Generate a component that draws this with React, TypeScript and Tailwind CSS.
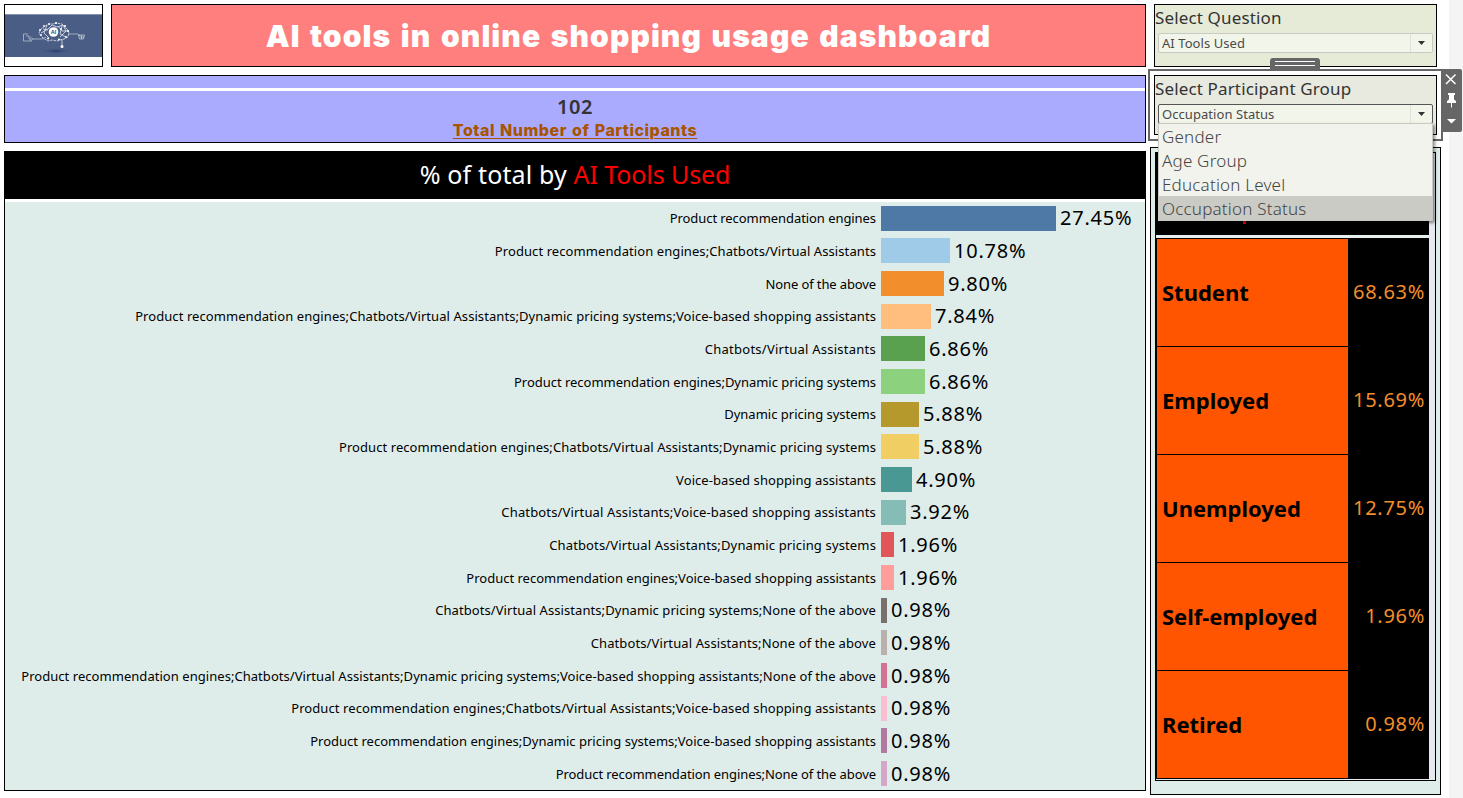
import React from "react";

const bars = [
  { label: "Product recommendation engines", value: 27.45, fill: "bg-[#4e79a7]", tracking: -0.067 },
  { label: "Product recommendation engines;Chatbots/Virtual Assistants", value: 10.78, fill: "bg-[#a0cbe8]", tracking: 0.086 },
  { label: "None of the above", value: 9.8, fill: "bg-[#f28e2b]", tracking: -0.12 },
  { label: "Product recommendation engines;Chatbots/Virtual Assistants;Dynamic pricing systems;Voice-based shopping assistants", value: 7.84, fill: "bg-[#ffbe7d]", tracking: 0.07 },
  { label: "Chatbots/Virtual Assistants", value: 6.86, fill: "bg-[#59a14f]", tracking: 0.25 },
  { label: "Product recommendation engines;Dynamic pricing systems", value: 6.86, fill: "bg-[#8cd17d]", tracking: -0.03 },
  { label: "Dynamic pricing systems", value: 5.88, fill: "bg-[#b6992d]", tracking: 0 },
  { label: "Product recommendation engines;Chatbots/Virtual Assistants;Dynamic pricing systems", value: 5.88, fill: "bg-[#f1ce63]", tracking: 0.067 },
  { label: "Voice-based shopping assistants", value: 4.9, fill: "bg-[#499894]", tracking: 0.065 },
  { label: "Chatbots/Virtual Assistants;Voice-based shopping assistants", value: 3.92, fill: "bg-[#86bcb6]", tracking: 0.15 },
  { label: "Chatbots/Virtual Assistants;Dynamic pricing systems", value: 1.96, fill: "bg-[#e15759]", tracking: 0.14 },
  { label: "Product recommendation engines;Voice-based shopping assistants", value: 1.96, fill: "bg-[#ff9d9a]", tracking: 0 },
  { label: "Chatbots/Virtual Assistants;Dynamic pricing systems;None of the above", value: 0.98, fill: "bg-[#79706e]", tracking: 0.075 },
  { label: "Chatbots/Virtual Assistants;None of the above", value: 0.98, fill: "bg-[#bab0ac]", tracking: 0.11 },
  { label: "Product recommendation engines;Chatbots/Virtual Assistants;Dynamic pricing systems;Voice-based shopping assistants;None of the above", value: 0.98, fill: "bg-[#d37295]", tracking: 0.045 },
  { label: "Product recommendation engines;Chatbots/Virtual Assistants;Voice-based shopping assistants", value: 0.98, fill: "bg-[#fabfd2]", tracking: 0.08 },
  { label: "Product recommendation engines;Dynamic pricing systems;Voice-based shopping assistants", value: 0.98, fill: "bg-[#b07aa1]", tracking: 0.01 },
  { label: "Product recommendation engines;None of the above", value: 0.98, fill: "bg-[#d4a6c8]", tracking: -0.085 },
];

const groups = [
  ["Student", "68.63%"],
  ["Employed", "15.69%"],
  ["Unemployed", "12.75%"],
  ["Self-employed", "1.96%"],
  ["Retired", "0.98%"],
];

const options = ["Gender", "Age Group", "Education Level", "Occupation Status"];

function Logo() {
  return (
    <svg width="97" height="43" viewBox="0 0 97 43" className="block">
      <defs>
        <radialGradient id="shade">
          <stop offset="0" stopColor="#243d70" />
          <stop offset="1" stopColor="#4a5d84" stopOpacity="0" />
        </radialGradient>
      </defs>
      <rect width="97" height="43" fill="#4a5d84" />
      <rect width="97" height="1" fill="#8492ab" />
      <ellipse cx="51" cy="37" rx="16" ry="3" fill="url(#shade)" />
      <g fill="none" stroke="#d3d9e4" strokeWidth="0.9">
        <path d="M36 22l-2-3 2-4 4-3 4-2 4 0 3-1 6 1 3 3 3 3 1 3-1 4-4 2-4 1-3 1-5-1-4 1-5-3z" strokeDasharray="2.500 0.800" />
        <path d="M36 19l7-4 4-4 5 2 6-2 3 6-4 4M42 11l-3 8 5 5M57 12l-2 8 6 3M53 12l4 5 5 0M38 15l5 1M55 23l3-3M57 25v7" />
        <path d="M23 20h-4.500v7H27M21 22h3v3h2v2M28 25.500l-3-3M27 25h10l4-2M63 20h10l2 2" opacity=".7" />
        <path d="M73.500 21h6l-1 4h-4zM75 23h4M76.500 21v4" opacity=".75" />
      </g>
      <g fill="#fff">
        <circle cx="35" cy="16" r="1" /><circle cx="39" cy="12" r=".9" />
        <circle cx="44" cy="10" r=".9" /><circle cx="51" cy="9" r="1.100" />
        <circle cx="60" cy="12" r="1.100" /><circle cx="56" cy="15" r=".9" />
        <circle cx="63" cy="17" r="1.100" /><circle cx="36" cy="21" r=".9" />
        <circle cx="43" cy="24.500" r="1" /><circle cx="54" cy="25.500" r="1" />
        <circle cx="61" cy="23" r="1" /><circle cx="57" cy="32.500" r="1.500" />
        <circle cx="48.500" cy="18" r="4.800" />
      </g>
      <text x="48.500" y="20" textAnchor="middle" fontSize="5.500" fontWeight="700" fontFamily="Liberation Sans, sans-serif" fill="#2d4273">AI</text>
    </svg>
  );
}

function Select({ value, border }: { value: string; border: string }) {
  return (
    <div className={"ml-[3px] flex h-[20px] w-[275px] rounded-[2px] border bg-[#f2f5ea] " + border}>
      <span className="flex-1 pl-[3px] text-[13px] leading-[18px] tracking-[0.06px] text-[#4a4a4a]">{value}</span>
      <span className="flex w-[22px] items-center justify-center border-l border-[#dfe1da]">
        <svg width="7" height="4"><path d="M0 0h7L3.5 4z" fill="#333" /></svg>
      </span>
    </div>
  );
}

export default function App() {
  return (
    <div className="flex h-[798px] w-[1463px] overflow-hidden bg-white pl-1 pt-1 font-['Noto_Sans',sans-serif] whitespace-nowrap">
      <main className="flex w-[1142px] flex-col gap-2">
        <header className="flex h-[63px] gap-2">
          <div className="flex w-[99px] items-center border border-black"><Logo /></div>
          <h1 className="flex flex-1 items-center justify-center border border-black bg-[#ff7f7f] pt-px font-['Inter',sans-serif] text-[30px] font-black tracking-[1.1px] [word-spacing:2.5px] text-white">
            AI tools in online shopping usage dashboard
          </h1>
        </header>
        <section className="flex h-[68px] flex-col border border-black bg-[#aaaaff] text-center">
          <div className="h-[15px] border-b-3 border-white" />
          <div className="pt-[4px] text-[20px] leading-[24px] font-semibold tracking-[0.6px] text-[#333]">102</div>
          <div className="pt-px font-['Inter',sans-serif] text-[16px] leading-[21px] font-extrabold tracking-[0.5px] [word-spacing:1.2px] text-[#a85400] underline decoration-1 underline-offset-2">
            Total Number of Participants
          </div>
        </section>
        <section className="flex h-[640px] flex-col border border-black bg-[#dfedea]">
          <h2 className="h-[50px] shrink-0 border-b-3 border-white bg-black text-center text-[25px] leading-[44px] tracking-[0.15px] text-white">
            % of total by <span className="tracking-[-0.1px] text-[#ff0000]">AI Tools Used</span>
          </h2>
          <div className="grid flex-1 grid-rows-18">
            {bars.map((b) => (
              <div key={b.label} className="flex min-h-0 items-center">
                <span className="w-[871px] text-right text-[13px] leading-4 text-black" style={{ letterSpacing: b.tracking }}>{b.label}</span>
                <span className={"ml-[5px] h-[25px] " + b.fill} style={{ width: Math.round(b.value * 6.375 + 0.1) }} />
                <span className="ml-1 text-[20px] leading-6 tracking-[0.75px] text-black">{b.value.toFixed(2)}%</span>
              </div>
            ))}
          </div>
        </section>
      </main>

      <aside className="ml-[2px] flex w-[295px] flex-col">
        <section className="relative ml-[6px] h-[63px] w-[283px] border border-black bg-[#e6ebd8]">
          <h3 className="mb-[4px] h-[24px] text-[17px] leading-[26px] tracking-[0.14px] text-[#333]">Select Question</h3>
          <Select value="AI Tools Used" border="border-[#c8cac5]" />
          <div className="absolute top-[53px] left-[115px] flex h-[12px] w-[50px] flex-col gap-[3px] rounded-t-[3px] bg-[#666] px-[5px] pt-[3px]">
            <i className="h-px bg-white" />
            <i className="h-px bg-white" />
          </div>
        </section>
        <section className="relative mt-[2px] h-[72px] border-2 border-[#666] p-1">
          <div className="h-[60px] w-[283px] border border-black bg-[#e8e9df]">
            <h3 className="mb-[4px] h-[24px] text-[17px] leading-[26px] tracking-[0.14px] text-[#333]">Select Participant Group</h3>
            <Select value="Occupation Status" border="border-[#555]" />
          </div>
          <div className="absolute -top-[2px] left-[291px] z-10 flex h-[63px] w-[21px] flex-col items-center rounded-r-[2px] bg-[#666]">
            <svg width="21" height="63" viewBox="0 0 21 63">
              <path d="M5 5.500l9.500 9.500M14.500 5.500L5 15" stroke="#fff" strokeWidth="1.500" />
              <path d="M7 24h7v2h-1v4.500l2 1.500v2h-4v4.500h-1V34H6v-2l2-1.500V26H7z" fill="#fff" />
              <path d="M6 50h9l-4.500 4.500z" fill="#fff" />
            </svg>
          </div>
          <ul className="absolute top-[52px] left-[8px] z-20 h-[98px] w-[275px] border border-[#c8c8c4] bg-[#f2f3ec] shadow-[2px_2px_3px_rgba(0,0,0,0.45)]">
            {options.map((o, i) => (
              <li key={o} className={"h-6 pl-[3px] text-[17px] leading-[26px] font-[350] tracking-[0.2px] text-[#444] " + (i === 3 ? "bg-[#cbcbc5]" : "")}>{o}</li>
            ))}
          </ul>
        </section>
        <section className="mt-[6px] ml-[2px] h-[648px] w-[291px] border border-black bg-[#dfedea] p-1">
          <div className="flex h-[629px] w-[281px] flex-col border border-black bg-[#e6e9ef]">
            <div className="relative h-[82px] w-[273px] bg-black">
              <i className="absolute top-[67px] left-[87px] h-[4px] w-[3px] bg-[#ff0000]" />
            </div>
            <div className="h-[3px] w-[273px] bg-[#e6f0ee]" />
            <div className="h-[541px] w-[273px] bg-black pt-px pl-px">
              {groups.map(([name, pct]) => (
                <div key={name} className="flex h-[108px] items-center">
                  <div className="flex h-full w-[191px] items-center border-b border-black bg-[#ff5500] pl-[5px] text-[22px] font-bold text-black">{name}</div>
                  <div className="flex-1 pr-[4px] pb-[2px] text-right text-[20px] tracking-[0.7px] text-[#f28e2b]">{pct}</div>
                </div>
              ))}
            </div>
          </div>
        </section>
      </aside>
      <div className="-mt-1 ml-[6px] w-[14px] bg-[#f4f4f4]" />
    </div>
  );
}
